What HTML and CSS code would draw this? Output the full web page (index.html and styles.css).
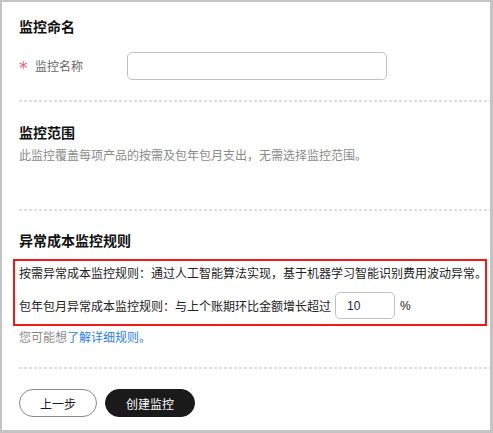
FILE: index.html
```html
<!DOCTYPE html>
<html lang="zh-CN">
<head>
<meta charset="utf-8">
<title>创建监控</title>
<link rel="stylesheet" href="styles.css">
</head>
<body>
<div class="frame">
  <section class="section section-name">
    <h2 class="title">监控命名</h2>
    <div class="form-row">
      <label class="label"><span class="star">*</span>监控名称</label>
      <input class="text-input" type="text">
    </div>
  </section>
  <div class="divider"></div>
  <section class="section section-scope">
    <h2 class="title">监控范围</h2>
    <p class="desc">此监控覆盖每项产品的按需及包年包月支出，无需选择监控范围。</p>
  </section>
  <div class="divider"></div>
  <section class="section section-rules">
    <h2 class="title">异常成本监控规则</h2>
    <div class="highlight">
      <p class="rule">按需异常成本监控规则：通过人工智能算法实现，基于机器学习智能识别费用波动异常。</p>
      <div class="rule rule-row">
        <span>包年包月异常成本监控规则：与上个账期环比金额增长超过</span>
        <input class="num-input" type="text" value="10">
        <span class="pct">%</span>
      </div>
    </div>
    <p class="hint">您可能想<a class="link" href="#">了解详细规则。</a></p>
  </section>
  <div class="divider"></div>
  <div class="actions">
    <button class="btn btn-outline" type="button">上一步</button>
    <button class="btn btn-primary" type="button">创建监控</button>
  </div>
</div>
</body>
</html>
```

FILE: styles.css
```css
* { box-sizing: border-box; }
html, body { margin: 0; padding: 0; background: #fff; }
body {
  font-family: "Noto Sans CJK SC", "Liberation Sans", sans-serif;
  color: #1a1a1a;
}
.frame {
  width: 493px;
  height: 433px;
  border-style: solid;
  border-color: #c4c4c4;
  border-width: 2px 3px 3px 2px;
  padding-left: 17px;
  overflow: hidden;
}
.section { margin: 0; }
.title {
  margin: 0;
  font-size: 14px;
  line-height: 20px;
  font-weight: 700;
  color: #111;
}
.section-name { padding-top: 14px; padding-bottom: 20px; }
.form-row {
  display: flex;
  align-items: center;
  margin-top: 16px;
  height: 28px;
}
.label {
  width: 108px;
  font-size: 12px;
  line-height: 18px;
  color: #666;
  display: flex;
  align-items: center;
}
.star {
  color: #f5587a;
  font-size: 17px;
  line-height: 18px;
  width: 16px;
  padding-left: 0;
  font-family: "DejaVu Sans", sans-serif;
  position: relative;
  top: 2px;
}
.text-input {
  width: 260px;
  height: 28px;
  border: 1px solid #c2c2c2;
  border-radius: 5px;
  outline: none;
  padding: 0 10px;
  font-size: 12px;
  background: #fff;
}
.divider {
  height: 2px;
  background: repeating-linear-gradient(to right, #dedede 0 3px, transparent 3px 5px);
}
.section-scope { padding-top: 20px; padding-bottom: 45px; }
.desc {
  margin: 4px 0 0;
  font-size: 12px;
  line-height: 18px;
  color: #8a8a8a;
}
.section-rules { padding-top: 19px; padding-bottom: 21px; }
.highlight {
  margin: 9px 0 0 -6px;
  width: 474px;
  border: 2px solid #f01818;
  padding: 3px 0 5px 4px;
}
.rule {
  margin: 0;
  font-size: 12px;
  line-height: 18px;
  color: #222;
  white-space: nowrap;
}
.rule-row {
  display: flex;
  align-items: center;
  margin-top: 10px;
}
.num-input {
  width: 60px;
  height: 27px;
  margin-left: 4px;
  border: 1px solid #c2c2c2;
  border-radius: 5px;
  outline: none;
  padding: 0 11px;
  font-family: "Liberation Sans", sans-serif;
  font-size: 12px;
  color: #1a2a44;
  background: #fff;
}
.pct {
  margin-left: 5px;
  font-family: "Liberation Sans", sans-serif;
  font-size: 12px;
}
.hint {
  margin: 2px 0 0;
  font-size: 12px;
  line-height: 18px;
  color: #8a8a8a;
}
.link { color: #2b7de9; text-decoration: none; }
.actions {
  display: flex;
  gap: 8px;
  padding-top: 20px;
}
.btn {
  height: 28px;
  border-radius: 14px;
  font-family: "Noto Sans CJK SC", sans-serif;
  font-size: 12px;
  cursor: pointer;
  padding: 0;
}
.btn-outline {
  width: 78px;
  background: #fff;
  border: 1px solid #8a8a8a;
  color: #1a1a1a;
}
.btn-primary {
  width: 90px;
  background: #1a1a1a;
  border: 1px solid #1a1a1a;
  color: #fff;
}
```
